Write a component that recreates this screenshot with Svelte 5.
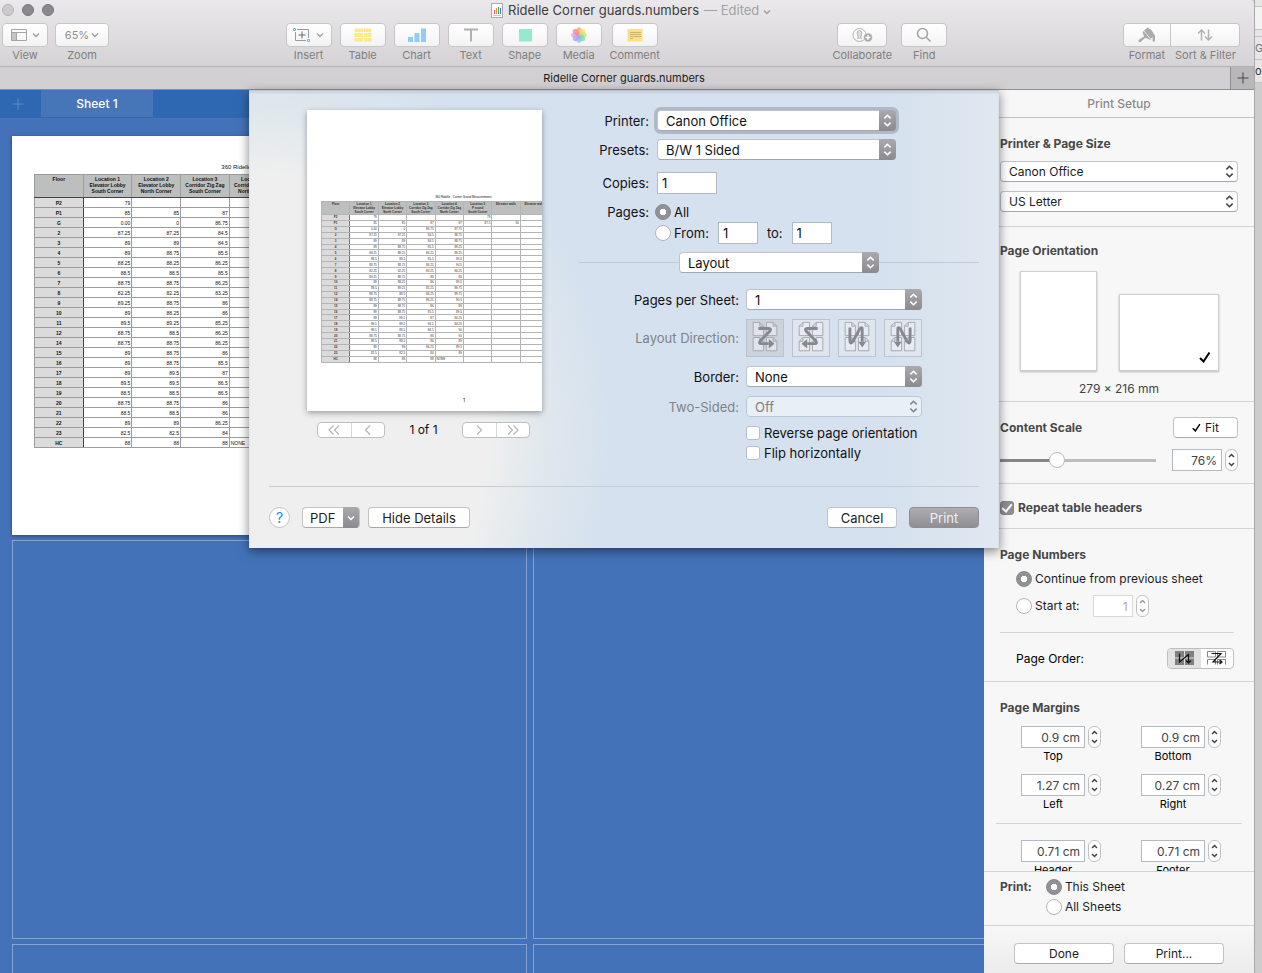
<script lang="ts">
  const columns = [
    ['Floor'],
    ['Location 1', 'Elevator Lobby', 'South Corner'],
    ['Location 2', 'Elevator Lobby', 'North Corner'],
    ['Location 3', 'Corridor Zig Zag', 'South Corner'],
    ['Location 4', 'Corridor Zig Zag', 'North Corner'],
    ['Location 5', 'P round', 'South Corner'],
    ['Elevator walls'],
    ['Elevator walls'],
    [''],
    ['']
  ];

  const rows = [
    ['P2', '79', '', '', '', '79'],
    ['P1', '85', '85', '87', '87', '87.5', '90'],
    ['G', '0.00', '0', '86.75', '87.75'],
    ['2', '87.25', '87.25', '84.5', '88.75'],
    ['3', '89', '89', '84.5', '88.75'],
    ['4', '89', '88.75', '85.5', '89.25'],
    ['5', '88.25', '88.25', '86.25', '89.25'],
    ['6', '88.5', '88.5', '85.5', '89.5'],
    ['7', '88.75', '88.75', '86.25', '90.5'],
    ['8', '82.25', '82.25', '83.25', '84.25'],
    ['9', '89.25', '88.75', '86', '86'],
    ['10', '89', '88.25', '86', '89.5'],
    ['11', '89.5', '89.25', '85.25', '89.75'],
    ['12', '88.75', '88.5', '86.25', '89.75'],
    ['14', '88.75', '88.75', '86.25', '90.5'],
    ['15', '89', '88.75', '86', '89'],
    ['16', '89', '88.75', '85.5', '89.5'],
    ['17', '89', '89.5', '87', '84.25'],
    ['18', '89.5', '89.5', '86.5', '84.25'],
    ['19', '88.5', '88.5', '86.5', '90'],
    ['20', '88.75', '88.75', '86', '90'],
    ['21', '88.5', '88.5', '86', '89'],
    ['22', '89', '89', '86.25', '89.5'],
    ['23', '82.5', '82.5', '84', '89'],
    ['HC', '88', '88', '88', 'NONE']
  ];

  const insertTools = ['Table', 'Chart', 'Text', 'Shape', 'Media', 'Comment'];
  const directions = ['Z', 'Reversed Z', 'Reversed N', 'N'];
  const petals = ['#f9a35c', '#f7dc6a', '#c3e27a', '#7fd8a4', '#79c3ee', '#a49cee', '#d59af0', '#fb8585'];

  let printer = $state('Canon Office');
  let preset = $state('B/W 1 Sided');
  let copies = $state('1');
  let pageRange = $state('all');
  let fromPage = $state('1');
  let toPage = $state('1');
  let direction = $state('Z');
  let scale = $state(35);
  let repeatHeaders = $state(true);
  let numbering = $state('continue');
  let printScope = $state('this');
</script>

{#snippet popup(id: string, value: string, kind: string, disabled = false)}
  <span class="popup {kind}" class:off={disabled}>
    <select {id} {disabled} aria-label={value}>
      <option>{value}</option>
    </select>
    <svg class="popup-arrows" viewBox="0 0 16 20" aria-hidden="true">
      <path d="M5 8l3-3 3 3M5 12l3 3 3-3" />
    </svg>
  </span>
{/snippet}

{#snippet stepper(name: string, disabled = false)}
  <span class="stepper" class:off={disabled}>
    <button aria-label="Increase {name}" {disabled}><svg viewBox="0 0 10 10"><path d="M2.500 7L5 4.500l2.500 2.500" /></svg></button>
    <button aria-label="Decrease {name}" {disabled}><svg viewBox="0 0 10 10"><path d="M2.500 3L5 5.500 7.500 3" /></svg></button>
  </span>
{/snippet}

{#snippet margin(name: string, value: string)}
  <div class="margin">
    <div class="margin-row">
      <input class="field right" id="margin-{name}" {value} />
      {@render stepper(name)}
    </div>
    <label for="margin-{name}">{name}</label>
  </div>
{/snippet}

{#snippet guardTable(size: string)}
  <table class="guards {size}">
    <caption>360 Ridelle - Corner Guard Measurements</caption>
    <thead>
      <tr>
        {#each columns as lines}
          <th>{#each lines as line}<div>{line}</div>{/each}</th>
        {/each}
      </tr>
    </thead>
    <tbody>
      {#each rows as row}
        <tr>
          {#each columns as _, i}
            <td class:floor={i === 0} class:note={row[i] === 'NONE'}>{row[i] ?? ''}</td>
          {/each}
        </tr>
      {/each}
    </tbody>
  </table>
{/snippet}

{#snippet chevron()}
  <svg class="chevron" viewBox="0 0 8 6" aria-hidden="true"><path d="M1 1.500l3 3 3-3" /></svg>
{/snippet}

<div class="desktop">
  <div class="window">
    <header class="titlebar">
      <div class="title-row">
        <div class="lights"><i class="light dim"></i><i class="light"></i><i class="light"></i></div>
        <h1>
          <svg class="doc-icon" viewBox="0 0 12 15" aria-hidden="true">
            <rect x=".5" y=".5" width="11" height="14" fill="#fff" stroke="#aaa" />
            <path d="M3.500 11V7" stroke="#f0506a" />
            <path d="M5.500 11V5" stroke="#f08a3c" />
            <path d="M7.500 11V4" stroke="#3cae5a" />
            <path d="M9.500 11V5" stroke="#3c7ad8" />
            <path d="M2 12.500h8" stroke="#ccc" />
          </svg>
          Ridelle Corner guards.numbers <span class="edited">— Edited {@render chevron()}</span>
        </h1>
      </div>

      <div class="toolbar">
        <div class="tools">
          <div class="tool view">
            <button id="tool-view" aria-label="View">
              <svg width="16" height="12" viewBox="0 0 16 12" fill="none" stroke="#a5a5a5">
                <path d="M1 4h4v7H1z" fill="#c4c4c4" stroke="none" />
                <path d="M.5.500h15v11H.5zM0 3.500h16M5.500 3.500v8" />
              </svg>
              {@render chevron()}
            </button>
            <label for="tool-view">View</label>
          </div>
          <div class="tool zoom">
            <button id="tool-zoom" aria-label="Zoom">65%{@render chevron()}</button>
            <label for="tool-zoom">Zoom</label>
          </div>
        </div>

        <div class="tools">
          <div class="tool">
            <button id="tool-insert" aria-label="Insert">
              <svg width="18" height="14" viewBox="0 0 18 14" fill="none" stroke="#999">
                <path d="M4 1.500h11.500V10M13 12.500H2.500V4" />
                <path d="M9 3.500v7M5.500 7h7" stroke="#666" />
                <path d="M.5.500h2v2h-2zM14.500 11.500h2v2h-2z" stroke="#6db9ee" />
              </svg>
              {@render chevron()}
            </button>
            <label for="tool-insert">Insert</label>
          </div>
          {#each insertTools as name}
            <div class="tool" class:wide={name === 'Comment'}>
              <button id="tool-{name}" aria-label={name}>
                <svg width="18" height="16" viewBox="0 0 18 16">
                  {#if name === 'Table'}
                    <path d="M.5 1.500h17v13H.5z" fill="#fbe98d" />
                    <path d="M.5 5.500h17M.5 10.500h17M9.500 1.500v13" stroke="#fffbe0" />
                  {:else if name === 'Chart'}
                    <path d="M0 10h5v5H0zM6.500 6h5v9h-5zM13 1.500h5V15h-5z" fill="#8fcdf3" />
                  {:else if name === 'Text'}
                    <path d="M2 2.500h14M9 2.500v12" stroke="#b0b0b0" stroke-width="2" />
                  {:else if name === 'Shape'}
                    <path d="M3 2h13v12.500H3z" fill="#93ead0" />
                  {:else if name === 'Media'}
                    {#each petals as color, i}
                      <ellipse cx="9" cy="4" rx="2.700" ry="3.800" fill={color} opacity=".75" transform="rotate({i * 45} 9 8)" />
                    {/each}
                  {:else}
                    <path d="M1.500 2h15v12.500h-15z" fill="#fbe180" />
                    <path d="M4 5.500h11M4 7.500h11M4 9.500h11M4 11.500h3" stroke="#c9b66b" />
                  {/if}
                </svg>
              </button>
              <label for="tool-{name}">{name}</label>
            </div>
          {/each}
        </div>

        <div class="tools">
          <div class="tool share">
            <button id="tool-collaborate" aria-label="Collaborate">
              <svg width="21" height="16" viewBox="0 0 21 16" fill="none" stroke="#b3b3b3">
                <circle cx="7.500" cy="8" r="6.500" />
                <path d="M5.500 12c1-1.500.5-2.500 0-4-.7-3 .3-4.500 2-4.500s2.700 1.500 2 4.500c-.5 1.500-1 2.500 0 4" fill="#dcdcdc" />
                <circle cx="16" cy="10.500" r="4.500" fill="#a8a8a8" stroke="#fff" stroke-width=".6" />
                <path d="M16 8v5M13.500 10.500h5" stroke="#fff" stroke-width="1.400" />
              </svg>
            </button>
            <label for="tool-collaborate">Collaborate</label>
          </div>
          <div class="tool share">
            <button id="tool-find" aria-label="Find">
              <svg width="16" height="16" viewBox="0 0 16 16" fill="none" stroke="#a5a5a5" stroke-width="1.600">
                <circle cx="6.500" cy="6.500" r="5" /><path d="M10 10l4.500 4.500" />
              </svg>
            </button>
            <label for="tool-find">Find</label>
          </div>
        </div>

        <div class="tools joined">
          <div class="tool format">
            <button id="tool-format" aria-label="Format">
              <svg width="18" height="16" viewBox="0 0 18 16" fill="#ababab">
                <path d="M4.500 5L9 1l1-.8L11.500 2l1.500.5 4 6v5a1.200 1.200 0 0 1-2.400 0V10L12 13 9.500 11.500 7 11l-4.500 4a1.500 1.500 0 0 1-2-2L6 9.500z" />
                <path d="M5.500 3.500l7 8.500" stroke="#f8f8f8" stroke-width=".8" />
              </svg>
            </button>
            <label for="tool-format">Format</label>
          </div>
          <div class="tool sort">
            <button id="tool-sort" aria-label="Sort &amp; Filter">
              <svg width="16" height="14" viewBox="0 0 16 14" fill="none" stroke="#b0b0b0" stroke-width="1.500">
                <path d="M4.500 12.500V2M1 5.500L4.500 2 8 5.500M11.500 1.500V12M8 8.500l3.500 3.500L15 8.500" />
              </svg>
            </button>
            <label for="tool-sort">Sort &amp; Filter</label>
          </div>
        </div>
      </div>
    </header>

    <nav class="doc-tabs">
      <span>Ridelle Corner guards.numbers</span>
      <button aria-label="New tab"><svg viewBox="0 0 12 12"><path d="M6 .500v11M.5 6h11" /></svg></button>
    </nav>

    <div class="workspace">
      <main class="canvas">
        <div class="sheet-tabs">
          <button class="add-sheet" aria-label="Add sheet"><svg viewBox="0 0 12 12"><path d="M6 .500v11M.5 6h11" /></svg></button>
          <button class="sheet-tab">Sheet 1</button>
        </div>
        <div class="pages">
          <div class="page filled">{@render guardTable('large')}</div>
          {#each Array(5) as _}
            <div class="page"></div>
          {/each}
        </div>
      </main>

      <aside class="setup">
        <h2>Print Setup</h2>
        <div class="scroller">
          <section class="printer">
            <h3>Printer &amp; Page Size</h3>
            {@render popup('setup-printer', 'Canon Office', 'plain')}
            {@render popup('setup-paper', 'US Letter', 'plain')}
          </section>

          <section class="orientation">
            <h3>Page Orientation</h3>
            <div class="papers">
              <button class="paper portrait" aria-label="Portrait"></button>
              <button class="paper landscape" aria-label="Landscape">
                <svg viewBox="0 0 12 12"><path d="M1 7l3.500 3.500L10.500 1.500" /></svg>
              </button>
            </div>
            <p>279 × 216 mm</p>
          </section>

          <section class="scale">
            <div class="spread">
              <h3>Content Scale</h3>
              <button class="push fit"><svg viewBox="0 0 12 12"><path d="M1 7l3.500 3.500L10.500 1.500" /></svg>Fit</button>
            </div>
            <div class="spread">
              <input class="slider" type="range" aria-label="Content scale" bind:value={scale} style="--fill: {scale}%" />
              <div class="scale-value">
                <input class="field right percent" aria-label="Scale percent" value="76%" />
                {@render stepper('scale')}
              </div>
            </div>
          </section>

          <section class="headers">
            <label><input type="checkbox" bind:checked={repeatHeaders} />Repeat table headers</label>
          </section>

          <section class="numbers">
            <h3>Page Numbers</h3>
            <label class="choice"><input type="radio" value="continue" bind:group={numbering} />Continue from previous sheet</label>
            <div class="start">
              <label class="choice"><input type="radio" value="start" bind:group={numbering} />Start at:</label>
              <input class="field right first-page" aria-label="First page" value="1" disabled />
              {@render stepper('first page', true)}
            </div>
            <hr />
            <div class="order">
              <span>Page Order:</span>
              <div class="segments">
                <button class="active" aria-label="Down, then across">
                  <svg viewBox="0 0 19 15"><path d="M0 0h9v6.500H0zM10 0h9v6.500h-9zM0 7.500h9V14H0zM10 7.500h9V14h-9z" fill="#808080" /><path d="M4.500 2.500v8.500l9-7.500v8M11 9.500l2.500 2.500L16 9.500" fill="none" stroke="#111" stroke-width="1.200" /></svg>
                </button>
                <button aria-label="Across, then down">
                  <svg viewBox="0 0 19 15"><path d="M.5.500h8v5.500h-8zM10.500.500h8v5.500h-8zM.5 13.500V8.500h8v5M10.500 13.500V8.500h8v5" fill="none" stroke="#888" /><path d="M4.500 2.500h9.500L6 11h8M12.500 9l2.500 2-2.500 2" fill="none" stroke="#111" stroke-width="1.200" /></svg>
                </button>
              </div>
            </div>
          </section>

          <section class="margins">
            <h3>Page Margins</h3>
            <div class="margin-grid">
              {@render margin('Top', '0.9 cm')}
              {@render margin('Bottom', '0.9 cm')}
              {@render margin('Left', '1.27 cm')}
              {@render margin('Right', '0.27 cm')}
            </div>
            <hr />
            <div class="margin-grid">
              {@render margin('Header', '0.71 cm')}
              {@render margin('Footer', '0.71 cm')}
            </div>
          </section>
        </div>

        <div class="scope">
          <h3>Print:</h3>
          <div>
            <label class="choice"><input type="radio" value="this" bind:group={printScope} />This Sheet</label>
            <label class="choice"><input type="radio" value="all" bind:group={printScope} />All Sheets</label>
          </div>
        </div>
        <div class="setup-actions">
          <button class="push">Done</button>
          <button class="push">Print...</button>
        </div>
      </aside>

      <div class="dialog-layer">
        <div class="dialog" role="dialog" aria-label="Print">
          <div class="dialog-body">
            <div class="preview">
              <div class="preview-page">
                {@render guardTable('small')}
                <span class="folio">1</span>
              </div>
              <div class="pager">
                <div class="segments">
                  <button aria-label="First page"><svg viewBox="0 0 14 12"><path d="M6.500 1.500L2 6l4.500 4.500M12 1.500L7.500 6l4.500 4.500" /></svg></button>
                  <button aria-label="Previous page"><svg viewBox="0 0 14 12"><path d="M9 1.500L4.500 6 9 10.500" /></svg></button>
                </div>
                <span>1 of 1</span>
                <div class="segments">
                  <button aria-label="Next page"><svg viewBox="0 0 14 12"><path d="M5 1.500L9.500 6 5 10.500" /></svg></button>
                  <button aria-label="Last page"><svg viewBox="0 0 14 12"><path d="M2 1.500L6.500 6 2 10.500M7.500 1.500L12 6l-4.500 4.500" /></svg></button>
                </div>
              </div>
            </div>

            <form class="options">
              <div class="basic">
                <label for="printer">Printer:</label>
                {@render popup('printer', printer, 'accent focused')}
                <label for="preset">Presets:</label>
                {@render popup('preset', preset, 'accent')}
                <label class="gap-top" for="copies">Copies:</label>
                <input class="field gap-top copies" id="copies" bind:value={copies} />
                <span class="caption">Pages:</span>
                <label class="choice"><input type="radio" value="all" bind:group={pageRange} />All</label>
                <span></span>
                <div class="range">
                  <label class="choice"><input type="radio" value="range" bind:group={pageRange} />From:</label>
                  <input class="field page-no" aria-label="From page" bind:value={fromPage} />
                  <label for="to-page">to:</label>
                  <input class="field page-no" id="to-page" bind:value={toPage} />
                </div>
              </div>

              <div class="pane-switch">{@render popup('pane', 'Layout', 'accent')}</div>

              <div class="layout-options">
                <label for="per-sheet">Pages per Sheet:</label>
                {@render popup('per-sheet', '1', 'accent')}
                <span class="caption muted">Layout Direction:</span>
                <div class="directions">
                  {#each directions as name, i}
                    <button type="button" class:active={direction === name} aria-label={name} onclick={() => (direction = name)}>
                      <svg viewBox="0 0 36 38">
                        <g transform={i % 2 ? 'translate(36 0) scale(-1 1)' : undefined}>
                          {#each [[5, 2], [19, 2], [5, 18], [19, 18]] as [x, y]}
                            <path class="leaf" d="M{x + 0.5} {y + 0.5}h7l4 4v10h-11zM{x + 7.5} {y + 0.5}v4h4" />
                          {/each}
                          {#if i < 2}
                            <path class="flow" d="M11 9h11q3 0 1 3L13 22q-2 3 1 3h8" />
                            <path class="tip" d="M22 20l6 5-6 5z" />
                          {:else}
                            <path class="flow" d="M10.500 8v14q0 4 3 1l7-13q3-4 3 0v13" />
                            <path class="tip" d="M19.500 23h8l-4 6z" />
                          {/if}
                        </g>
                      </svg>
                    </button>
                  {/each}
                </div>
                <label for="border">Border:</label>
                {@render popup('border', 'None', 'accent')}
                <label class="muted" for="two-sided">Two-Sided:</label>
                {@render popup('two-sided', 'Off', 'accent', true)}
                <span></span>
                <div class="ticks">
                  <label><input type="checkbox" />Reverse page orientation</label>
                  <label><input type="checkbox" />Flip horizontally</label>
                </div>
              </div>
            </form>
          </div>

          <footer class="dialog-actions">
            <button class="help" aria-label="Help">?</button>
            <button class="push pdf">PDF<span>{@render chevron()}</span></button>
            <button class="push details">Hide Details</button>
            <button class="push cancel">Cancel</button>
            <button class="push primary">Print</button>
          </footer>
        </div>
      </div>
    </div>
  </div>

  <div class="behind" aria-hidden="true">
    <div class="strip s1"></div>
    <div class="strip s2"></div>
    <div class="strip s1"></div>
    <div class="strip s3">G</div>
    <div class="strip s3 dark">on</div>
  </div>
</div>

<style>
  :global(body) {
    margin: 0;
    overflow: hidden;
    background: #cdcdcd;
  }

  .desktop {
    display: flex;
    height: 100vh;
    font-family: Inter, "Liberation Sans", sans-serif;
    font-size: 12px;
    line-height: 16px;
    color: #1c1c1c;
  }

  .desktop :global(*) {
    box-sizing: border-box;
  }

  button,
  input,
  select {
    margin: 0;
    padding: 0;
    border: 0;
    font: inherit;
    color: inherit;
  }

  h1,
  h2,
  h3,
  p {
    margin: 0;
    font-size: 12px;
  }

  svg {
    flex: none;
  }

  .window {
    flex: 1;
    min-width: 0;
    display: flex;
    flex-direction: column;
    border-radius: 0 5px 0 0;
    overflow: hidden;
    background: #f6f6f6;
  }

  /* Title bar */
  .titlebar {
    flex: none;
    height: 67px;
    background: linear-gradient(#eae8eb, #d5d3d5);
    border-bottom: 1px solid #b4b2b4;
  }

  .title-row {
    display: grid;
    grid-template-columns: 60px 1fr 52px;
    align-items: center;
    height: 20px;
  }

  .lights {
    display: flex;
    gap: 8px;
    padding-left: 2px;
  }

  .light {
    width: 12px;
    height: 12px;
    border: 1px solid #77767a;
    border-radius: 50%;
    background: #89888c;
  }

  .light.dim {
    border-color: #b5b4b5;
    background: #cccbcc;
  }

  h1 {
    display: flex;
    align-items: center;
    justify-content: center;
    gap: 5px;
    font-size: 13px;
    font-weight: 400;
    color: #3c3c3c;
  }

  .doc-icon {
    width: 12px;
    height: 15px;
  }

  .edited {
    color: #a3a2a4;
  }

  .chevron {
    width: 8px;
    height: 6px;
    fill: none;
    stroke: #a0a0a0;
    stroke-width: 1.4;
  }

  .toolbar {
    display: flex;
    justify-content: space-between;
    padding: 3px 14px 0 0;
  }

  .tools {
    display: flex;
  }

  .tool {
    display: flex;
    flex-direction: column;
    align-items: center;
    width: 54px;
  }

  .tool button {
    display: flex;
    align-items: center;
    justify-content: center;
    gap: 5px;
    width: 46px;
    height: 24px;
    border: 1px solid #c6c5c7;
    border-radius: 4px;
    background: linear-gradient(#fff, #f3f3f3);
    color: #8f8f8f;
  }

  .tool label {
    font-size: 11px;
    color: #7f7e80;
    white-space: nowrap;
  }

  .tool.view {
    width: 50px;
  }

  .tool.zoom {
    width: 64px;
  }

  .tool.zoom button {
    gap: 2px;
    width: 54px;
    font-size: 11px;
  }

  .tool.wide {
    width: 58px;
  }

  .tool.share {
    width: 62px;
  }

  .share:first-child button {
    width: 50px;
  }

  .tool.format {
    width: 48px;
  }

  .tool.sort {
    width: 69px;
  }

  .joined button {
    width: 100%;
  }

  .format button {
    border-radius: 4px 0 0 4px;
  }

  .sort button {
    border-left: 0;
    border-radius: 0 4px 4px 0;
  }

  .doc-tabs {
    flex: none;
    display: flex;
    height: 23px;
    padding-left: 18px;
    border-bottom: 1px solid #8f8d91;
    background: #d2d0d2;
  }

  .doc-tabs span {
    flex: 1;
    font-size: 11px;
    line-height: 22px;
    text-align: center;
  }

  .doc-tabs button {
    width: 24px;
    border-left: 1px solid #8f8d91;
    background: #b9b7ba;
  }

  .doc-tabs svg,
  .add-sheet svg {
    display: block;
    width: 12px;
    margin: 0 auto;
    stroke: #444;
  }

  /* Canvas */
  .workspace {
    flex: 1;
    min-height: 0;
    display: flex;
    position: relative;
  }

  .canvas {
    flex: 1;
    min-width: 0;
    overflow: hidden;
    background: #4472b9;
  }

  .sheet-tabs {
    display: flex;
    height: 28px;
    background: #2f68b2;
    border-bottom: 1px solid #3766aa;
  }

  .add-sheet {
    width: 41px;
    padding-right: 6px;
    background: none;
  }

  .add-sheet svg {
    stroke: #5a8bcb;
  }

  .sheet-tab {
    width: 112px;
    background: #4676b8;
    color: #fff;
    font-weight: 500;
  }

  .pages {
    display: grid;
    grid-template-columns: 515px 515px;
    grid-auto-rows: 399px;
    gap: 5px 6px;
    padding: 18px 12px;
  }

  .page {
    border: 1px solid #86a3d2;
    overflow: hidden;
  }

  .page.filled {
    padding: 26px 0 0 21px;
    border-color: #fff;
    background: #fff;
    box-shadow: 0 1px 4px rgb(0 0 0 / 0.4);
  }

  .guards {
    table-layout: fixed;
    border-collapse: collapse;
    font-family: "Liberation Sans", Arial, sans-serif;
    color: #111;
  }

  .guards caption {
    white-space: nowrap;
  }

  .guards th,
  .guards td {
    padding: 0 1px;
    border: 1px solid #9c9c9c;
    text-align: right;
    vertical-align: middle;
    white-space: nowrap;
    overflow: hidden;
  }

  .guards th {
    padding: 1px 0;
    border-bottom-color: #444;
    background: #bcbfbe;
    text-align: center;
    vertical-align: top;
  }

  .guards .floor {
    border-right-color: #444;
    background: #dbdbdb;
    font-weight: 700;
    text-align: center;
  }

  .guards .note {
    text-align: left;
  }

  .large {
    width: 488px;
    font-size: 5px;
    line-height: 6px;
  }

  .large caption {
    padding-bottom: 3px;
    font-size: 6px;
    line-height: 8px;
  }

  .large thead tr {
    height: 23px;
  }

  .large tbody tr {
    height: 10px;
  }

  .large td {
    line-height: 8px;
  }

  .small {
    width: 285px;
    height: 162px;
    font-size: 3px;
    line-height: 4px;
  }

  .small caption {
    padding-bottom: 2px;
    font-size: 3px;
  }

  .guards.small th,
  .guards.small td {
    border-color: #b4b4b4;
    color: #333;
  }

  .small thead tr {
    height: 13px;
  }

  .guards.small th {
    padding: 0;
  }

  .guards.small .floor {
    border-right-color: #777;
  }

  /* Shared controls */
  .push {
    display: inline-flex;
    align-items: center;
    justify-content: center;
    height: 21px;
    border: 1px solid #c3c3c5;
    border-bottom-color: #a9a9ad;
    border-radius: 4px;
    background: #fff;
    color: #1c1c1c;
  }

  .field {
    height: 22px;
    padding: 0 4px;
    border: 1px solid #b4bac2;
    background: #fff;
  }

  .field.right {
    text-align: right;
    color: #444;
  }

  .popup {
    display: block;
    position: relative;
    height: 21px;
  }

  .popup select {
    appearance: none;
    display: block;
    width: 100%;
    height: 21px;
    padding: 0 20px 0 8px;
    border: 1px solid #c0c3c9;
    border-bottom-color: #a3a7ae;
    border-radius: 4px;
    background: #fff;
  }

  .popup-arrows {
    position: absolute;
    top: 0;
    right: 0;
    width: 17px;
    height: 21px;
    fill: none;
    stroke: #444;
    stroke-width: 1.5;
    pointer-events: none;
  }

  .accent .popup-arrows {
    border-radius: 0 4px 4px 0;
    background: linear-gradient(#aaa9ad, #8b8a8f);
    stroke: #fff;
  }

  .focused select {
    box-shadow: 0 0 0 3px #b0b9c7;
  }

  .popup.off select {
    border-color: #bcc7d4;
    background: #e9eff7;
    color: #808080;
    opacity: 1;
  }

  .popup.off .popup-arrows {
    background: none;
    stroke: #808690;
  }

  input[type="radio"] {
    appearance: none;
    flex: none;
    width: 16px;
    height: 16px;
    border: 1px solid #b4b4b8;
    border-radius: 50%;
    background: #fff;
  }

  input[type="radio"]:checked {
    border-color: #87868b;
    background: radial-gradient(circle, #fff 0 3px, #929196 3px);
  }

  input[type="checkbox"] {
    appearance: none;
    flex: none;
    display: grid;
    place-items: center;
    width: 14px;
    height: 14px;
    border: 1px solid #b9bec6;
    border-radius: 3px;
    background: #fff;
  }

  input[type="checkbox"]:checked {
    border-color: #87868b;
    background: #8f8e93;
  }

  input[type="checkbox"]:checked::after {
    content: "";
    width: 4px;
    height: 8px;
    margin-bottom: 2px;
    border: solid #fff;
    border-width: 0 2px 2px 0;
    transform: rotate(40deg);
  }

  .choice {
    display: flex;
    align-items: center;
    gap: 3px;
    height: 20px;
  }

  .segments {
    display: flex;
    border: 1px solid #bfbfc1;
    border-radius: 4px;
    background: #fff;
    overflow: hidden;
  }

  .segments button {
    display: flex;
    align-items: center;
    justify-content: center;
    flex: 1;
    background: none;
  }

  .stepper {
    display: flex;
    flex-direction: column;
    width: 13px;
    height: 22px;
    border: 1px solid #c2c2c4;
    border-radius: 6px;
    background: #fff;
  }

  .stepper button {
    flex: 1;
    min-height: 0;
    background: none;
  }

  .stepper svg {
    display: block;
    width: 11px;
    height: 10px;
    fill: none;
    stroke: #444;
    stroke-width: 1.5;
  }

  .stepper.off svg {
    stroke: #999;
  }

  hr {
    margin: 0;
    border: 0;
    border-top: 1px solid #d3d3d3;
  }

  /* Print setup sidebar */
  .setup {
    flex: none;
    display: flex;
    flex-direction: column;
    width: 270px;
    background: #f7f7f7;
  }

  .setup h2 {
    flex: none;
    height: 28px;
    border-bottom: 1px solid #c4c4c4;
    font-weight: 500;
    line-height: 27px;
    text-align: center;
    color: #8a8a8a;
  }

  .setup h3 {
    font-weight: 700;
    color: #484848;
  }

  .scroller {
    flex: 1;
    min-height: 0;
    overflow: hidden;
  }

  .setup section {
    padding: 0 16px;
    border-bottom: 1px solid #d3d3d3;
  }

  .setup .printer {
    display: flex;
    flex-direction: column;
    gap: 9px;
    height: 109px;
    padding-top: 18px;
  }

  .setup .orientation {
    height: 175px;
    padding-top: 16px;
  }

  .papers {
    display: flex;
    align-items: flex-end;
    justify-content: center;
    gap: 22px;
    padding-top: 12px;
  }

  .paper {
    border: 1px solid #cfcfcf;
    background: #fff;
    box-shadow: 0 1px 2px rgb(0 0 0 / 0.25);
  }

  .portrait {
    width: 77px;
    height: 100px;
  }

  .landscape {
    display: flex;
    align-items: flex-end;
    justify-content: flex-end;
    width: 100px;
    height: 77px;
    padding: 7px;
  }

  .landscape svg,
  .fit svg {
    width: 12px;
    height: 12px;
    fill: none;
    stroke: #000;
    stroke-width: 2;
  }

  .fit svg {
    width: 9px;
    height: 9px;
  }

  .orientation p {
    padding-top: 10px;
    text-align: center;
    color: #444;
  }

  .setup .scale {
    display: flex;
    flex-direction: column;
    gap: 11px;
    height: 82px;
    padding-top: 15px;
  }

  .spread {
    display: flex;
    align-items: center;
    justify-content: space-between;
  }

  .fit {
    gap: 4px;
    width: 65px;
  }

  .slider {
    appearance: none;
    width: 156px;
    height: 16px;
    background: linear-gradient(90deg, #86858a var(--fill), #bdbdbf var(--fill)) center / 100% 3px no-repeat;
  }

  .slider::-webkit-slider-thumb {
    appearance: none;
    width: 16px;
    height: 16px;
    border: 1px solid #bcbcbc;
    border-radius: 50%;
    background: #fff;
  }

  .scale-value,
  .margin-row,
  .start {
    display: flex;
    align-items: center;
    gap: 3px;
  }

  .percent {
    width: 50px;
  }

  .setup .headers {
    height: 45px;
    padding-top: 16px;
  }

  .headers label {
    display: flex;
    align-items: center;
    gap: 4px;
    font-weight: 700;
    color: #484848;
  }

  .setup .numbers {
    display: flex;
    flex-direction: column;
    height: 153px;
    padding-top: 18px;
  }

  .numbers > .choice,
  .start,
  .order {
    margin-left: 16px;
  }

  .numbers > .choice,
  .start {
    margin-top: 6px;
  }

  .first-page {
    width: 40px;
    margin-left: 10px;
  }

  .first-page:disabled {
    border-color: #d8d8d8;
    color: #aaa;
  }

  .numbers hr {
    margin: 15px 4px 0 0;
  }

  .order {
    display: flex;
    align-items: center;
    justify-content: space-between;
    padding: 15px 4px 0 0;
    color: #000;
  }

  .order .segments {
    width: 67px;
    height: 21px;
  }

  .order svg {
    width: 19px;
    height: 15px;
  }

  .order .active {
    background: #e2e2e2;
  }

  .setup .margins {
    padding: 18px 12px 0;
    border: 0;
  }

  .margins h3 {
    padding: 0 4px;
  }

  .margin-grid {
    display: grid;
    grid-template-columns: 80px 80px;
    gap: 10px 40px;
    padding: 10px 25px 11px;
  }

  .margin {
    display: flex;
    flex-direction: column;
  }

  .margin .field {
    width: 64px;
  }

  .margin label {
    width: 64px;
    font-size: 11px;
    text-align: center;
    color: #000;
  }

  .margin-grid + hr + .margin-grid {
    padding-top: 16px;
  }

  .scope {
    flex: none;
    display: flex;
    gap: 14px;
    padding: 5px 16px 8px;
    border-top: 1px solid #d3d3d3;
    border-bottom: 1px solid #d3d3d3;
  }

  .scope h3 {
    line-height: 20px;
  }

  .setup-actions {
    flex: none;
    display: flex;
    gap: 10px;
    justify-content: center;
    height: 47px;
    padding-top: 17px;
    background: linear-gradient(#f7f7f7, #ececec);
  }

  .setup-actions .push {
    width: 100px;
  }

  /* Print dialog */
  .dialog-layer {
    position: absolute;
    top: 0;
    left: 0;
    right: 6px;
    display: flex;
    justify-content: center;
  }

  .dialog {
    width: 750px;
    height: 458px;
    padding: 0 20px;
    background:
      linear-gradient(90deg, transparent 85%, #e0e8f0),
      radial-gradient(ellipse 360px 390px at 0 75%, #efefef 66%, #e0e8ed 82%, #d5e1ee);
    box-shadow: 0 3px 10px rgb(0 0 0 / 0.5), inset 0 3px 4px -2px rgb(0 0 0 / 0.2);
    font-size: 13px;
    color: #111;
  }

  .dialog-body {
    display: flex;
    justify-content: space-between;
    height: 397px;
    border-bottom: 1px solid #c6cdd4;
  }

  .preview {
    width: 235px;
    margin-left: 38px;
    padding-top: 20px;
  }

  .preview-page {
    height: 301px;
    padding: 85px 0 0 14px;
    overflow: hidden;
    background: #fff;
    box-shadow: 0 2px 6px rgb(0 0 0 / 0.35);
  }

  .folio {
    display: block;
    padding: 34px 0 0 142px;
    font-size: 5px;
    line-height: 6px;
  }

  .pager {
    display: flex;
    align-items: center;
    justify-content: space-between;
    padding: 11px 12px 0 10px;
    font-size: 12px;
  }

  .pager .segments {
    width: 68px;
    height: 16px;
  }

  .pager button + button {
    border-left: 1px solid #d5d5d5;
  }

  .pager svg {
    width: 14px;
    height: 12px;
    fill: none;
    stroke: #b5b5b5;
    stroke-width: 1.2;
  }

  .options {
    width: 400px;
    padding-top: 20px;
  }

  .basic,
  .layout-options {
    display: grid;
    align-items: center;
  }

  .basic {
    grid-template-columns: 70px 239px;
    gap: 8px;
  }

  .basic > label:not(.choice),
  .layout-options > label,
  .caption {
    text-align: right;
    white-space: nowrap;
  }

  .gap-top {
    margin-top: 4px;
  }

  .copies {
    width: 60px;
  }

  .basic > .choice,
  .range {
    margin-left: -2px;
  }

  .range {
    display: flex;
    align-items: center;
    gap: 9px;
    margin-top: -8px;
  }

  .page-no {
    width: 40px;
  }

  .pane-switch {
    display: flex;
    align-items: center;
    padding: 8px 0 16px;
  }

  .pane-switch::before,
  .pane-switch::after {
    content: "";
    flex: 1;
    border-top: 1px solid #bfcad8;
  }

  .pane-switch :global(.popup) {
    width: 200px;
  }

  .layout-options {
    grid-template-columns: 160px 176px;
    gap: 9px 7px;
  }

  .muted {
    color: #808386;
  }

  .directions {
    display: flex;
    justify-content: space-between;
  }

  .directions button {
    width: 38px;
    height: 38px;
    border: 1px solid #bcc3cc;
    background: #e0e6ee;
  }

  .directions .active {
    background: #cdd3db;
  }

  .directions svg {
    display: block;
    width: 36px;
    height: 36px;
  }

  .leaf {
    fill: #eceff3;
    fill-opacity: 0.6;
    stroke: #a2a7ad;
  }

  .flow {
    fill: none;
    stroke: #85898e;
    stroke-width: 3;
  }

  .tip {
    fill: #85898e;
  }

  .ticks {
    margin-top: -3px;
  }

  .ticks label {
    display: flex;
    align-items: center;
    gap: 4px;
    height: 20px;
    white-space: nowrap;
  }

  .dialog-actions {
    display: flex;
    align-items: center;
    gap: 8px;
    height: 61px;
  }

  .help {
    width: 21px;
    height: 21px;
    border: 1px solid #c3c3c5;
    border-radius: 50%;
    background: #fff;
    color: #1a82f7;
    font-size: 14px;
  }

  .pdf {
    justify-content: space-between;
    width: 58px;
    margin-left: 4px;
    padding-left: 7px;
  }

  .pdf span {
    display: flex;
    align-items: center;
    justify-content: center;
    width: 16px;
    height: 21px;
    border-radius: 0 4px 4px 0;
    background: linear-gradient(#aaa9ad, #8b8a8f);
  }

  .pdf .chevron {
    stroke: #fff;
  }

  .details {
    width: 102px;
  }

  .cancel,
  .primary {
    width: 70px;
  }

  .cancel {
    margin-left: auto;
  }

  .primary {
    margin-left: 4px;
    border-color: #8e8d92;
    background: linear-gradient(#aeadb1, #8f8e93);
    color: #f0f0f2;
  }

  /* Sliver of the window behind */
  .behind {
    flex: none;
    width: 8px;
    overflow: hidden;
    border-left: 1px solid #a8a8a8;
    background: #cdcdcd;
  }

  .strip {
    height: 23px;
    border-bottom: 1px solid #c4c4c4;
    background: #e6e6e6;
    font-size: 11px;
    line-height: 23px;
    color: #777;
  }

  .s1 {
    height: 7px;
  }

  .s2 {
    background: #f3f3f3;
  }

  .dark {
    color: #333;
  }
</style>
